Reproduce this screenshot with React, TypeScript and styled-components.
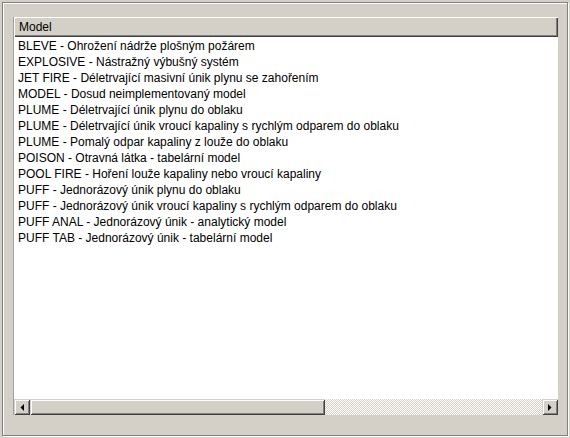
import React from "react";
import styled, { createGlobalStyle } from "styled-components";

const GlobalStyle = createGlobalStyle`
  html, body {
    margin: 0;
    padding: 0;
    background: #d4d0c8;
  }
  body {
    font-family: "Liberation Sans", Arial, sans-serif;
    font-size: 12px;
    color: #000;
  }
`;

const models = [
  "BLEVE - Ohrožení nádrže plošným požárem",
  "EXPLOSIVE - Nástražný výbušný systém",
  "JET FIRE - Déletrvající masivní únik plynu se zahořením",
  "MODEL - Dosud neimplementovaný model",
  "PLUME - Déletrvající únik plynu do oblaku",
  "PLUME - Déletrvající únik vroucí kapaliny s rychlým odparem do oblaku",
  "PLUME - Pomalý odpar kapaliny z louže do oblaku",
  "POISON - Otravná látka - tabelární model",
  "POOL FIRE - Hoření louže kapaliny nebo vroucí kapaliny",
  "PUFF - Jednorázový únik plynu do oblaku",
  "PUFF - Jednorázový únik vroucí kapaliny s rychlým odparem do oblaku",
  "PUFF ANAL - Jednorázový únik - analytický model",
  "PUFF TAB - Jednorázový únik - tabelární model",
];

const Window = styled.div`
  width: 570px;
  height: 438px;
  box-sizing: border-box;
  padding: 2px;
  background: #d4d0c8;
`;

const Frame = styled.div`
  height: 100%;
  box-sizing: border-box;
  border-top: 1px solid #808080;
  border-left: 1px solid #808080;
  border-right: 1px solid #808080;
  border-bottom: 1px solid #808080;
  box-shadow: inset 1px 1px 0 #fff, 1px 1px 0 #fff;
  padding: 14px 9px 20px 10px;
  display: flex;
  flex-direction: column;
`;

const Table = styled.div`
  flex: 1;
  display: flex;
  flex-direction: column;
  background: #fff;
  border-left: 1px solid #a0a0a0;
`;

const Header = styled.div`
  height: 20px;
  box-sizing: border-box;
  background: #d4d0c8;
  display: flex;
  align-items: center;
  padding-left: 5px;
  box-shadow: inset 1px 1px 0 #fff, inset -1px -1px 0 #404040, inset -2px -2px 0 #808080;
`;

const Rows = styled.div`
  flex: 1;
  padding-top: 1px;
`;

const Row = styled.div`
  height: 16px;
  line-height: 16px;
  padding-left: 4px;
  white-space: nowrap;
`;

const ScrollBar = styled.div`
  height: 16px;
  display: flex;
  margin-bottom: 0;
`;

const Raised = styled.div`
  box-sizing: border-box;
  background: #d4d0c8;
  box-shadow: inset 1px 1px 0 #d4d0c8, inset -1px -1px 0 #404040, inset 2px 2px 0 #fff, inset -2px -2px 0 #808080;
`;

const ArrowButton = styled(Raised)`
  width: 16px;
  height: 16px;
  display: flex;
  align-items: center;
  justify-content: center;
`;

const Thumb = styled(Raised)<{ $w: number }>`
  width: ${(p) => p.$w}px;
  height: 16px;
`;

const Track = styled.div`
  flex: 1;
  background-color: #fff;
  background-image: repeating-conic-gradient(#d4d0c8 0 25%, #fff 0 50%);
  background-size: 2px 2px;
`;

const Arrow = ({ dir }: { dir: "left" | "right" }) => (
  <svg width="4" height="7" viewBox="0 0 4 7">
    {dir === "left" ? (
      <polygon points="4,0 4,7 0.5,3.5" fill="#000" />
    ) : (
      <polygon points="0,0 0,7 3.5,3.5" fill="#000" />
    )}
  </svg>
);

export default function App() {
  return (
    <Window>
      <GlobalStyle />
      <Frame>
        <Table>
          <Header>Model</Header>
          <Rows>
            {models.map((m) => (
              <Row key={m}>{m}</Row>
            ))}
          </Rows>
          <ScrollBar>
            <ArrowButton>
              <Arrow dir="left" />
            </ArrowButton>
            <Thumb $w={295} />
            <Track />
            <ArrowButton>
              <Arrow dir="right" />
            </ArrowButton>
          </ScrollBar>
        </Table>
      </Frame>
    </Window>
  );
}
